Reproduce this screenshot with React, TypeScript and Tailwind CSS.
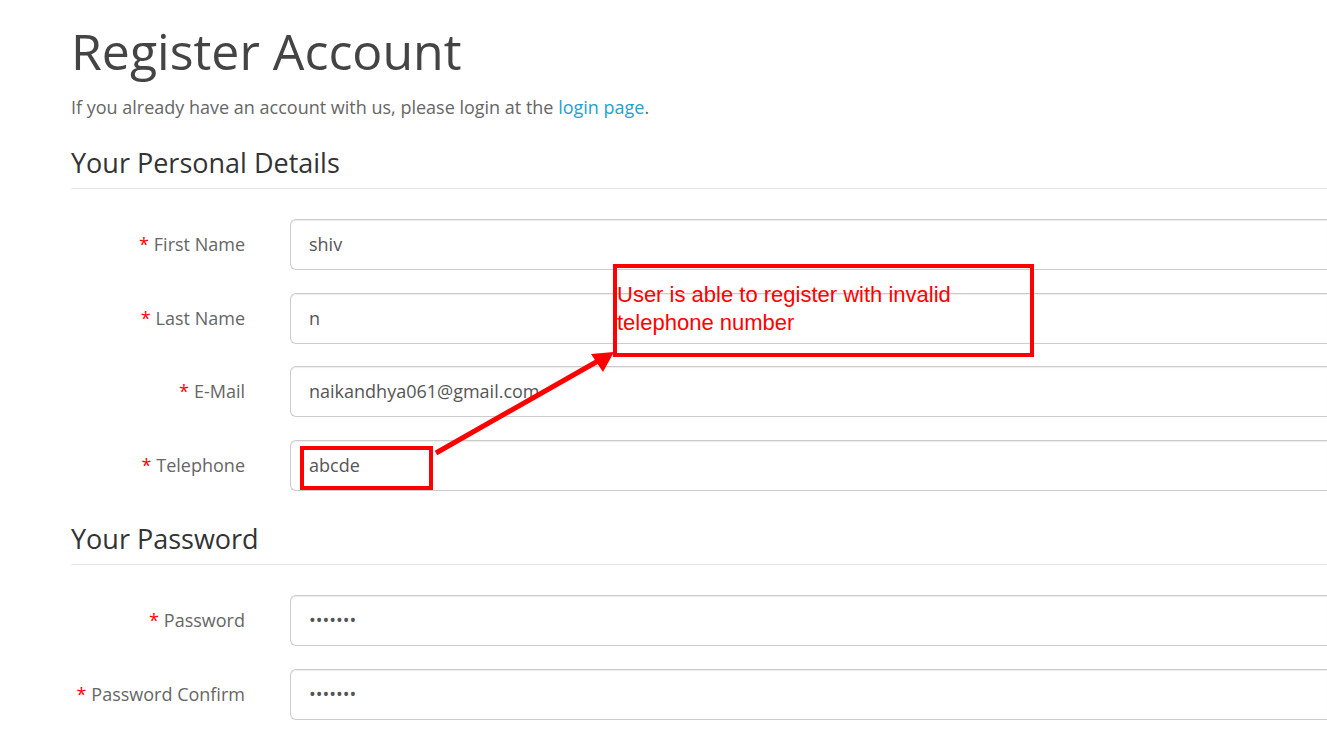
const personal = [
  { label: "First Name", value: "shiv" },
  { label: "Last Name", value: "n" },
  { label: "E-Mail", value: "naikandhya061@gmail.com" },
  { label: "Telephone", value: "abcde" },
];

const passwords = [
  { label: "Password", value: "•••••••" },
  { label: "Password Confirm", value: "•••••••" },
];

function Row({ label, value }: { label: string; value: string }) {
  return (
    <div className="flex items-center h-[51px]">
      <label className="w-[174px] text-right text-[18px] text-[#666]">
        <span className="text-[#f00] mr-[5px]">*</span>
        {label}
      </label>
      <div className="ml-[45px] flex-1 h-[51px] border border-r-0 border-[#ccc] rounded-l-[6px] shadow-[inset_0_1px_1px_rgba(0,0,0,0.075)] flex items-center pl-[18px] text-[18px] text-[#555]">
        {value}
      </div>
    </div>
  );
}

export default function App() {
  return (
    <div className="relative w-[1327px] h-[734px] overflow-hidden bg-white font-['Open_Sans',sans-serif]">
      <div className="pl-[71px] pt-[16px]">
        <h1 className="text-[50px] leading-[70px] text-[#444]">Register Account</h1>
        <p className="mt-[8px] text-[18px] text-[#666]">
          If you already have an account with us, please login at the{" "}
          <span className="text-[#23a1d1]">login page</span>.
        </p>

        <h2 className="mt-[24px] text-[27px] leading-[36px] text-[#333] pb-[7px] border-b border-[#e5e5e5]">
          Your Personal Details
        </h2>
        <div className="mt-[30px] flex flex-col gap-[22.7px]">
          {personal.map((r) => (
            <Row key={r.label} label={r.label} value={r.value} />
          ))}
        </div>

        <h2 className="mt-[30px] text-[27px] leading-[36px] text-[#333] pb-[7px] border-b border-[#e5e5e5]">
          Your Password
        </h2>
        <div className="mt-[30px] flex flex-col gap-[23px]">
          {passwords.map((r) => (
            <Row key={r.label} label={r.label} value={r.value} />
          ))}
        </div>
      </div>

      {/* annotation */}
      <div className="absolute left-[613px] top-[264px] w-[421px] h-[93px] border-[4px] border-[#f00] pl-[0px] pt-[13px] text-[22px] leading-[28px] text-[#f00] font-['Liberation_Sans',sans-serif]">
        User is able to register with invalid
        <br />
        telephone number
      </div>
      <div className="absolute left-[300px] top-[446px] w-[133px] h-[44px] border-[4px] border-[#f00]" />
      <svg className="absolute left-0 top-0" width="1327" height="734">
        <line x1="436" y1="453" x2="598" y2="361" stroke="#f00" strokeWidth="5" />
        <polygon points="614,352 591,354 603,372" fill="#f00" />
      </svg>
    </div>
  );
}
